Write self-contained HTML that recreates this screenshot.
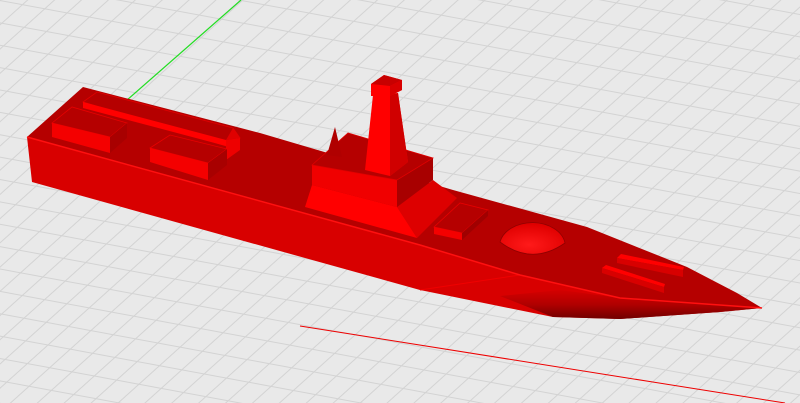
<!DOCTYPE html>
<html><head><meta charset="utf-8"><style>
html,body{margin:0;padding:0;background:#e9e9e9;overflow:hidden}
svg{display:block}
</style></head><body>
<svg width="800" height="403" viewBox="0 0 800 403" xmlns="http://www.w3.org/2000/svg">
<defs>
<pattern id="pa" width="800" height="22" patternUnits="userSpaceOnUse" patternTransform="rotate(10.5)">
<line x1="0" y1="0.5" x2="800" y2="0.5" stroke="#d3d3d3" stroke-width="1"/>
</pattern>
<pattern id="pb" width="18" height="800" patternUnits="userSpaceOnUse" patternTransform="rotate(48)">
<line x1="0.5" y1="0" x2="0.5" y2="800" stroke="#d3d3d3" stroke-width="1"/>
</pattern>
<linearGradient id="bow" x1="0" y1="0" x2="0" y2="1">
<stop offset="0" stop-color="#d40000"/><stop offset="0.5" stop-color="#b00000"/><stop offset="1" stop-color="#700000"/>
</linearGradient>
<radialGradient id="dome" cx="0.45" cy="0.7" r="0.65">
<stop offset="0" stop-color="#ff1a1a"/><stop offset="1" stop-color="#e00000"/>
</radialGradient>
</defs>
<rect width="800" height="403" fill="#e9e9e9"/>
<rect width="800" height="403" fill="url(#pa)"/>
<rect width="800" height="403" fill="url(#pb)"/>
<line x1="127" y1="100" x2="241" y2="0" stroke="#22dd22" stroke-width="1.2"/>
<line x1="300" y1="326" x2="785" y2="403" stroke="#ee0000" stroke-width="1"/>

<polygon points="27,137 420,245 520,275 620,298 762,308 720,312 620,319 553,317 420,290 32,182" fill="#d80000"/>
<polygon points="500,296 560,290 620,298 762,308 720,312 620,319 553,317" fill="url(#bow)"/>
<line x1="420" y1="290" x2="520" y2="275" stroke="#f00000" stroke-width="1"/>
<polygon points="83,87 260,133 453,190 587,227 687,267 737,293 762,308 620,298 520,275 420,245 27,137" fill="#b50000"/>
<polyline points="27,137 420,245 520,275 620,298 762,308" fill="none" stroke="#ff1010" stroke-width="1.5"/>

<polygon points="83,102 97,92 233,128 240,138 226,146" fill="#b50000" stroke="#e00000" stroke-width="0.8"/>
<polygon points="83,102 226,140 226,146 83,108" fill="#ff0000"/>
<polygon points="226,140 240,138 233,128 226,140" fill="#e00000"/>
<polygon points="226,140 240,138 240,150 226,160" fill="#ee0000"/>
<polygon points="52,123 72,107 127,123 110,137" fill="#b50000" stroke="#e80000" stroke-width="0.8"/>
<polygon points="52,123 110,137 110,153 52,137" fill="#f40000"/>
<polygon points="110,137 127,123 127,138 110,153" fill="#a80000"/>
<polygon points="150,148 170,135 227,149 208,163" fill="#b50000" stroke="#e80000" stroke-width="0.8"/>
<polygon points="150,148 208,163 208,180 150,162" fill="#f40000"/>
<polygon points="208,163 227,149 227,165 208,180" fill="#a80000"/>

<polygon points="397,207 433,180 457,198 417,238" fill="#dd0000"/>
<polygon points="312,185 397,207 417,238 305,207" fill="#ff0000"/>
<polygon points="312,165 397,180 397,207 312,185" fill="#f00000"/>
<polygon points="397,180 433,158 433,180 397,207" fill="#a80000"/>
<polygon points="312,165 348,133 433,158 397,180" fill="#b50000" stroke="#e00000" stroke-width="0.8"/>
<polygon points="335,127 327,155 342,157" fill="#b00000"/>
<polygon points="373,95 398,93 408,162 390,176 365,170" fill="#ff0000"/>
<polygon points="390,176 390,95 398,93 408,162" fill="#d00000"/>
<polygon points="371,84 384,75 402,80 402,90 390,96 371,96" fill="#ff0000"/>
<polygon points="371,84 384,75 402,80 390,86" fill="#c80000"/>
<polygon points="390,86 402,80 402,90 390,96" fill="#d80000"/>

<polygon points="434,227 460,203 488,210 462,233" fill="#b50000" stroke="#e80000" stroke-width="0.8"/>
<polygon points="434,227 462,233 462,240 434,234" fill="#f40000"/>
<polygon points="462,233 488,210 488,216 462,240" fill="#a00000"/>
<path d="M500,242 A33,24 0 0 1 565,243 Q532,266 500,242 Z" fill="url(#dome)" stroke="#900000" stroke-width="0.8"/>
<polygon points="617,258 621,254 684,267 683,270" fill="#ff0000"/>
<polygon points="617,258 683,270 683,277 617,263" fill="#d80000"/>
<polygon points="602,268 606,265 665,284 664,287" fill="#ff0000"/>
<polygon points="602,268 664,287 664,293 602,273" fill="#d80000"/>
</svg>
</body></html>
